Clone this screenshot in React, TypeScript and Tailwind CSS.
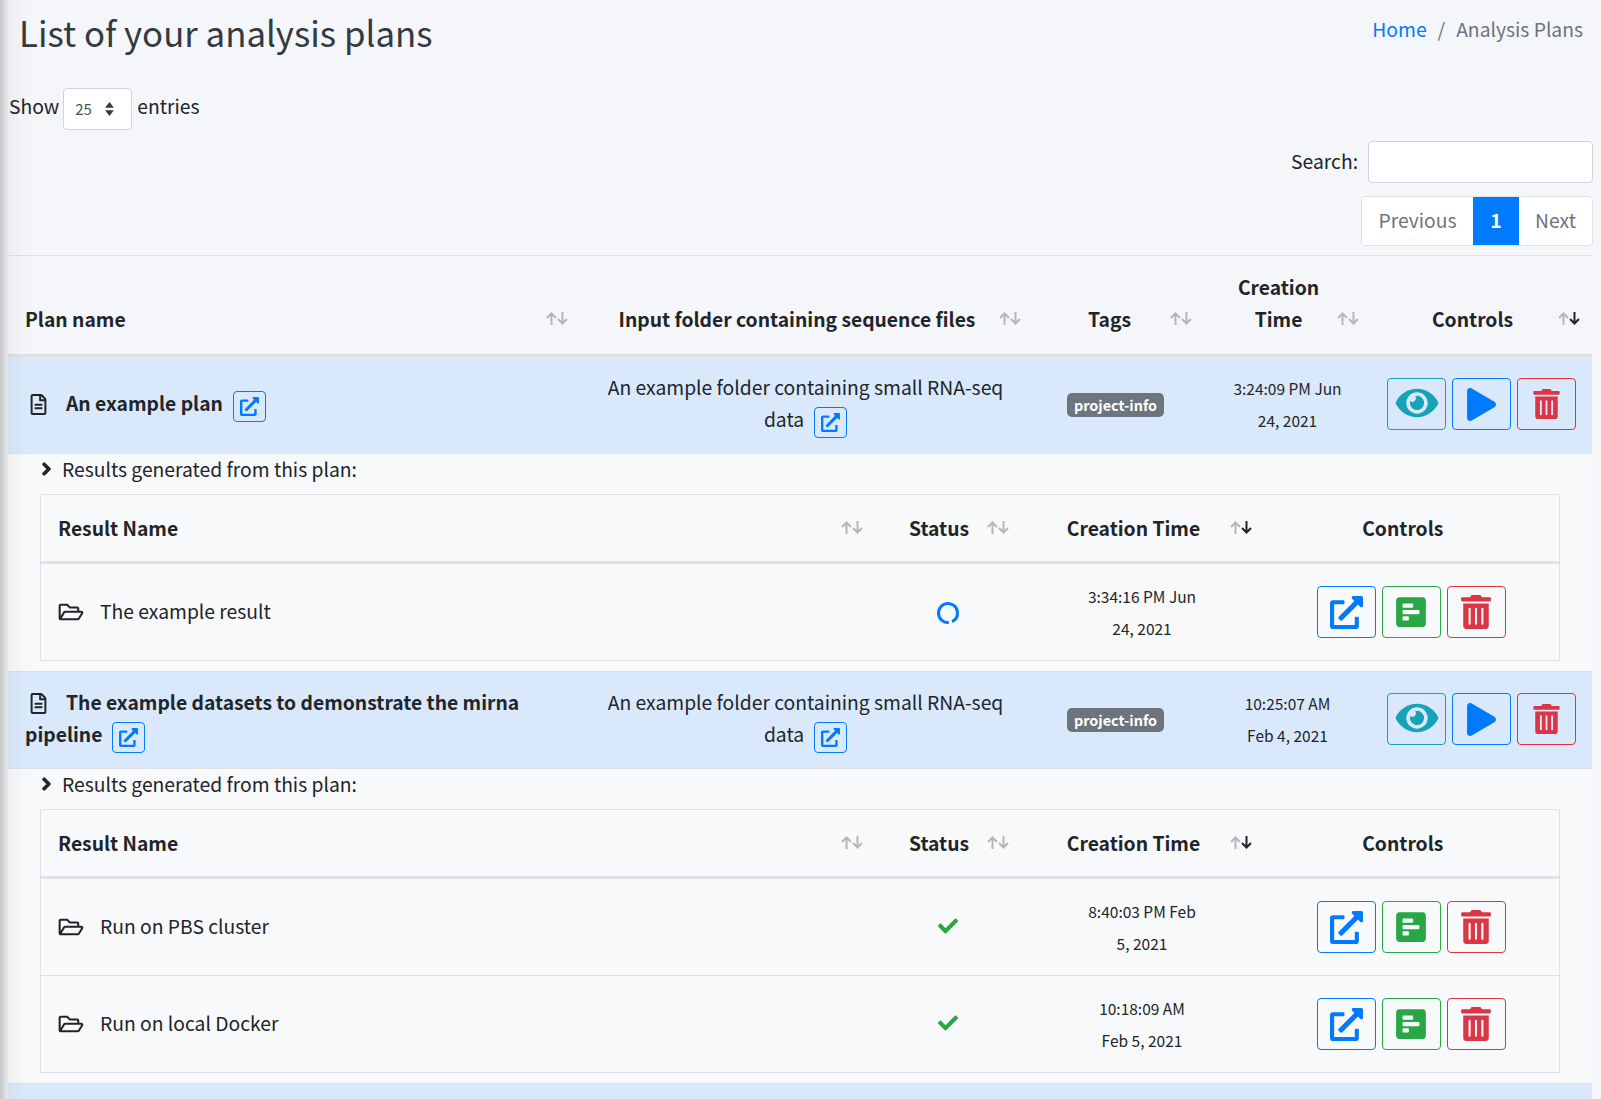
import {
  FaCheck,
  FaChevronRight,
  FaExternalLinkAlt,
  FaEye,
  FaPlay,
  FaPollH,
  FaRegFileAlt,
  FaRegFolderOpen,
  FaTrashAlt,
} from "react-icons/fa";

const fontStack = { fontFamily: '"Noto Sans CJK SC", "Noto Sans", sans-serif' };

function SortArrows({ active = false, nested = false }: { active?: boolean; nested?: boolean }) {
  return (
    <svg
      viewBox="0 0 22 13"
      fill="none"
      strokeWidth="2"
      className={
        nested
          ? "absolute right-[14px] bottom-[27px] h-[13px] w-[22px]"
          : "absolute right-[12px] bottom-[29px] h-[13px] w-[22px]"
      }
    >
      <path stroke="#b5b6b9" d="M5.500 13V1.500M1 6 5.500 1.500 10 6" />
      <path stroke={active ? "#212529" : "#b5b6b9"} d="M16.500 0V11.500M12 7 16.500 11.500 21 7" />
    </svg>
  );
}

function IconButton({
  color,
  className,
  children,
}: {
  color: string;
  className: string;
  children: React.ReactNode;
}) {
  return (
    <button className={`flex h-[52px] w-[59px] items-center justify-center rounded-[4px] border ${color} ${className}`}>
      {children}
    </button>
  );
}

function OpenLink() {
  return (
    <span className="ml-[10px] inline-flex h-[31px] w-[33px] items-center justify-center rounded-[4px] border border-[#007bff] align-middle text-[#007bff]">
      <FaExternalLinkAlt className="h-[19px] w-[19px]" />
    </span>
  );
}

function PlanRow({
  name,
  date,
  time,
  short = false,
}: {
  name: string;
  date: string;
  time: string;
  short?: boolean;
}) {
  return (
    <tr className={short ? "h-[97px] border-t border-b border-[#dee2e6] bg-[#d9e9fb]" : "h-[98px] border-t border-b border-[#dee2e6] bg-[#d9e9fb]"}>
      <td className="px-[17px] pb-[1px] font-bold text-[#212529]">
        <FaRegFileAlt className="mr-[19px] ml-[5px] inline h-[21px] w-[17px] -translate-y-[2px]" />
        {name}
        <OpenLink />
      </td>
      <td className="pr-[14px] pb-[1px] pl-[12px] text-center">
        <span>An example folder containing small RNA-seq data</span>
        <OpenLink />
      </td>
      <td className="pr-[18px] pb-[4px] pl-[12px] text-center">
        <span className="inline-block rounded-[5px] bg-[#6c757d] px-[7px] text-[14.400px] leading-[24px] font-bold text-white">
          project-info
        </span>
      </td>
      <td className="px-[12px] pb-[2px] text-center text-[15.500px]">
        {date}
        <br />
        {time}
      </td>
      <td className="px-[12px] pb-[2px]">
        <div className="flex justify-center gap-[6px]">
          <IconButton color="border-[#17a2b8]" className="text-[#17a2b8]">
            <FaEye className="h-[38px] w-[44px] -translate-y-[1px]" />
          </IconButton>
          <IconButton color="border-[#007bff]" className="text-[#007bff]">
            <FaPlay className="h-[33px] w-[33px]" />
          </IconButton>
          <IconButton color="border-[#dc3545]" className="text-[#dc3545]">
            <FaTrashAlt className="h-[30px] w-[27px]" />
          </IconButton>
        </div>
      </td>
    </tr>
  );
}

function ResultRow({
  name,
  status,
  date,
  time,
  short = false,
}: {
  name: string;
  status: "running" | "done";
  date: string;
  time: string;
  short?: boolean;
}) {
  return (
    <tr className={short ? "h-[97px] border-b border-[#dee2e6]" : "h-[98px] border-b border-[#dee2e6]"}>
      <td className="px-[17px] pb-[3px]">
        <FaRegFolderOpen className="mr-[16px] inline h-[22px] w-[26px] -translate-y-[1px]" />
        {name}
      </td>
      <td className="pr-[16px] pb-[4px] pl-[12px] text-center">
        {status === "running" ? (
          <svg viewBox="0 0 24 24" className="inline h-[24px] w-[24px] rotate-[85deg]">
            <circle cx="12" cy="12" r="9.500" fill="none" stroke="#007bff" strokeWidth="3" strokeDasharray="56 3.700" />
          </svg>
        ) : (
          <FaCheck className="inline h-[20px] w-[24px] -translate-y-[2px] text-[#28a745]" />
        )}
      </td>
      <td className="pr-[16px] pl-[12px] text-center text-[15.500px]">
        {date}
        <br />
        {time}
      </td>
      <td className="pr-[14px] pl-[12px]">
        <div className="flex justify-center gap-[6px]">
          <IconButton color="border-[#007bff]" className="text-[#007bff]">
            <FaExternalLinkAlt className="h-[33px] w-[33px]" />
          </IconButton>
          <IconButton color="border-[#28a745]" className="text-[#28a745]">
            <FaPollH className="h-[34px] w-[34px]" />
          </IconButton>
          <IconButton color="border-[#dc3545]" className="text-[#dc3545]">
            <FaTrashAlt className="h-[34px] w-[30px]" />
          </IconButton>
        </div>
      </td>
    </tr>
  );
}

function ResultsTable({ children }: { children: React.ReactNode }) {
  return (
    <>
      <div className="flex h-[40px] items-center pb-[10px] pl-[33px]">
        <FaChevronRight stroke="currentColor" strokeWidth={50} className="mr-[10px] h-[14px] w-[11px] text-[#212529]" />
        Results generated from this plan:
      </div>
      <div className="pr-[32px] pb-[10px] pl-[32px]">
        <table className="w-full table-fixed border-collapse border border-[#dee2e6]">
          <colgroup>
            <col className="w-[836px]" />
            <col className="w-[146px]" />
            <col className="w-[243px]" />
            <col />
          </colgroup>
          <thead>
            <tr className="h-[68px] border-b-[3px] border-[#dee2e6]">
              <th className="relative px-[17px] pb-[1px] text-left font-bold">
                Result Name
                <SortArrows nested />
              </th>
              <th className="relative pr-[33px] pb-[1px] pl-[12px] font-bold">
                Status
                <SortArrows nested />
              </th>
              <th className="relative pr-[33px] pb-[1px] pl-[12px] font-bold">
                Creation Time
                <SortArrows nested active />
              </th>
              <th className="px-[12px] pr-[31px] pb-[1px] font-bold">Controls</th>
            </tr>
          </thead>
          <tbody>{children}</tbody>
        </table>
      </div>
    </>
  );
}

export default function App() {
  return (
    <div
      className="relative h-[1099px] overflow-hidden bg-[#f4f6f9] pr-[9px] pl-[8px] text-[19.300px] leading-[32px] text-[#212529]"
      style={fontStack}
    >
      <div className="pointer-events-none absolute top-0 bottom-0 left-0 z-10 w-[30px] bg-gradient-to-r from-[#00000033] via-[#00000008] via-30% to-transparent" />

      <div className="flex h-[88px] justify-between pt-[7px]">
        <h1 className="pl-[11px] text-[34.800px] leading-[50px] font-normal text-[#343a40]">List of your analysis plans</h1>
        <div className="flex items-start pt-[6px] pr-[9px]">
          <span className="text-[#007bff]">Home</span>
          <span className="px-[11px] text-[#6c757d]">/</span>
          <span className="text-[#6c757d]">Analysis Plans</span>
        </div>
      </div>

      <div className="flex h-[42px] items-center pl-[1px]">
        <span className="mr-[4px] -translate-y-[3px]">Show</span>
        <span className="flex h-[42px] w-[69px] items-center rounded-[4px] border border-[#ced4da] bg-white pl-[11px] text-[15px] text-[#495057]">
          25
          <svg viewBox="0 0 10 16" className="ml-[12px] h-[14px] w-[11px]">
            <path fill="#343a40" d="M5 0 10 6.500H0ZM0 9.500H10L5 16Z" />
          </svg>
        </span>
        <span className="ml-[5px] -translate-y-[3px]">entries</span>
      </div>

      <div className="mt-[11px] -mr-[1px] flex h-[42px] items-center justify-end">
        <span className="mr-[10px] -translate-y-[1px]">Search:</span>
        <span className="h-[42px] w-[225px] rounded-[4px] border border-[#ced4da] bg-white" />
      </div>

      <div className="mt-[13px] -mr-[1px] flex justify-end">
        <div className="flex h-[50px] items-center overflow-hidden rounded-[4px] border border-[#dee2e6] bg-white text-[#6c757d]">
          <span className="flex h-full w-[111px] items-center justify-center pb-[2px]">Previous</span>
          <span className="flex h-[50px] w-[46px] items-center justify-center bg-[#007bff] pb-[2px] font-bold text-white">1</span>
          <span className="flex h-full w-[73px] items-center justify-center pb-[2px]">Next</span>
        </div>
      </div>

      <table className="mt-[9px] w-full table-fixed border-collapse">
        <colgroup>
          <col className="w-[572px]" />
          <col className="w-[453px]" />
          <col className="w-[171px]" />
          <col className="w-[167px]" />
          <col />
        </colgroup>
        <thead>
          <tr className="h-[100px] border-t border-b-[3px] border-[#dee2e6]">
            <th className="relative px-[17px] pt-[28px] text-left align-middle font-bold">
              Plan name
              <SortArrows />
            </th>
            <th className="relative px-[12px] pt-[28px] pr-[31px] font-bold">
              Input folder containing sequence files
              <SortArrows />
            </th>
            <th className="relative px-[12px] pt-[28px] pr-[30px] font-bold">
              Tags
              <SortArrows />
            </th>
            <th className="relative px-[12px] pr-[30px] pb-[4px] font-bold">
              Creation Time
              <SortArrows />
            </th>
            <th className="relative px-[12px] pt-[28px] pr-[30px] font-bold">
              Controls
              <SortArrows active />
            </th>
          </tr>
        </thead>
        <tbody>
          <PlanRow name="An example plan" date="3:24:09 PM Jun" time="24, 2021" />
          <tr>
            <td colSpan={5} className="bg-[#f8f9fa] p-0">
              <ResultsTable>
                <ResultRow name="The example result" status="running" date="3:34:16 PM Jun" time="24, 2021" />
              </ResultsTable>
            </td>
          </tr>
          <PlanRow short name="The example datasets to demonstrate the mirna pipeline" date="10:25:07 AM" time="Feb 4, 2021" />
          <tr>
            <td colSpan={5} className="bg-[#f8f9fa] p-0">
              <ResultsTable>
                <ResultRow name="Run on PBS cluster" status="done" date="8:40:03 PM Feb" time="5, 2021" />
                <ResultRow short name="Run on local Docker" status="done" date="10:18:09 AM" time="Feb 5, 2021" />
              </ResultsTable>
            </td>
          </tr>
          <tr className="h-[98px] border-t border-[#dee2e6] bg-[#d9e9fb]">
            <td colSpan={5} />
          </tr>
        </tbody>
      </table>
    </div>
  );
}
